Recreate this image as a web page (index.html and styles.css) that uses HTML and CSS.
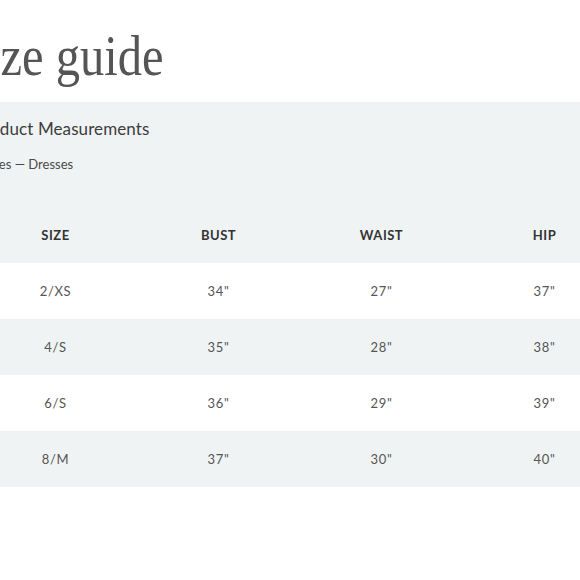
FILE: index.html
```html
<!DOCTYPE html>
<html lang="en">
<head>
<meta charset="utf-8">
<title>Size guide</title>
<link rel="stylesheet" href="styles.css">
</head>
<body>
<div class="page">
  <h1 class="title">Size guide</h1>
  <section class="panel">
    <div class="panel-head">
      <h2 class="panel-title">Product Measurements</h2>
      <p class="panel-sub">Sizes — Dresses</p>
    </div>
    <table class="sizes">
      <colgroup><col><col><col><col></colgroup>
      <thead>
        <tr><th>Size</th><th>Bust</th><th>Waist</th><th>Hip</th></tr>
      </thead>
      <tbody>
        <tr><td>2/XS</td><td>34"</td><td>27"</td><td>37"</td></tr>
        <tr><td>4/S</td><td>35"</td><td>28"</td><td>38"</td></tr>
        <tr><td>6/S</td><td>36"</td><td>29"</td><td>39"</td></tr>
        <tr><td>8/M</td><td>37"</td><td>30"</td><td>40"</td></tr>
      </tbody>
    </table>
  </section>
</div>
</body>
</html>
```
FILE: styles.css
```css
html, body {
  margin: 0;
  padding: 0;
  background: #ffffff;
  overflow: hidden;
}

.page {
  width: 680px;
  margin-left: -26px;
  font-family: Lato, "Open Sans", sans-serif;
}

.title {
  margin: 28px 0 18px -14px;
  font-family: "Liberation Serif", "Times New Roman", serif;
  font-weight: 400;
  font-size: 56px;
  line-height: 56px;
  color: #555555;
  transform: scaleX(0.867);
  transform-origin: left center;
  white-space: nowrap;
}

.panel {
  background: #f0f3f4;
}

.panel-head {
  padding: 17px 0 35px 0;
}

.panel-title {
  margin: 0;
  font-size: 17px;
  line-height: 20px;
  font-weight: 400;
  color: #3d3d3d;
  letter-spacing: 0.1px;
}

.panel-sub {
  margin: 17px 0 0 9px;
  font-size: 13px;
  line-height: 16px;
  color: #4a4a4a;
}

.sizes {
  width: 652px;
  table-layout: fixed;
  border-collapse: collapse;
  background: #ffffff;
}

.sizes col {
  width: 163px;
}

.sizes th,
.sizes td {
  height: 56px;
  padding: 0;
  text-align: center;
  vertical-align: middle;
  font-size: 13px;
}

.sizes th {
  background: #f0f3f4;
  font-weight: 700;
  text-transform: uppercase;
  color: #333333;
  letter-spacing: 0.5px;
}

.sizes td {
  color: #555555;
  letter-spacing: 0.7px;
}

.sizes tbody tr:nth-child(even) td {
  background: #f0f3f4;
}
```
